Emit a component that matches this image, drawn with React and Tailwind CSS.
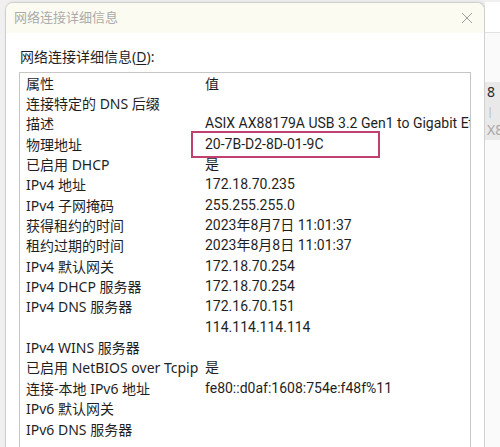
import React from "react";

const rows = [
  ["连接特定的 DNS 后缀", ""],
  ["描述", "ASIX AX88179A USB 3.2 Gen1 to Gigabit Ethernet Adapter"],
  ["物理地址", "20-7B-D2-8D-01-9C"],
  ["已启用 DHCP", "是"],
  ["IPv4 地址", "172.18.70.235"],
  ["IPv4 子网掩码", "255.255.255.0"],
  ["获得租约的时间", "2023年8月7日 11:01:37"],
  ["租约过期的时间", "2023年8月8日 11:01:37"],
  ["IPv4 默认网关", "172.18.70.254"],
  ["IPv4 DHCP 服务器", "172.18.70.254"],
  ["IPv4 DNS 服务器", "172.16.70.151"],
  ["", "114.114.114.114"],
  ["IPv4 WINS 服务器", ""],
  ["已启用 NetBIOS over Tcpip", "是"],
  ["连接-本地 IPv6 地址", "fe80::d0af:1608:754e:f48f%11"],
  ["IPv6 默认网关", ""],
  ["IPv6 DNS 服务器", ""],
];

const font = { fontFamily: '"Noto Sans", "Noto Sans CJK SC", sans-serif' };
const valFont = { fontFamily: 'Roboto, "Noto Sans CJK SC", sans-serif' };

export default function App() {
  return (
    <div
      className="w-[500px] h-[447px] overflow-hidden bg-[#f0f0f0] flex pt-[2px] pl-[5px]"
      style={font}
    >
      <div className="w-[480px] h-[460px] shrink-0 rounded-t-[8px] border border-[#d0d0d0] bg-white overflow-hidden flex flex-col shadow-[1px_0_3px_rgba(0,0,0,0.12)]">
        <div className="h-[30px] bg-[#fbfbf2] flex items-center justify-between pl-[8px] pr-[10px] shrink-0">
          <span className="text-[13px] text-[#ababab]">网络连接详细信息</span>
          <svg width="12" height="12" viewBox="0 0 12 12" className="mr-[1px]">
            <path d="M1 1 L11 11 M11 1 L1 11" stroke="#a0a0a0" strokeWidth="1" fill="none" />
          </svg>
        </div>
        <div className="pl-[14px] pt-[14px] text-[14px] leading-[20px] text-[#1f1f1f]">
          网络连接详细信息(<span className="underline underline-offset-2">D</span>):
        </div>
        <div className="relative ml-[13px] mt-[5px] w-[452px] flex-1 border border-[#c6c6c6] pt-0 pl-[6px] text-[14px] text-[#1f1f1f] overflow-hidden">
          <div className="flex h-[20.35px] items-center whitespace-nowrap">
            <div className="w-[179px] shrink-0">属性</div>
            <div>值</div>
          </div>
          {rows.map(([k, v], i) => (
            <div key={i} className="flex h-[20.35px] items-center whitespace-nowrap">
              <div className="w-[179px] shrink-0">{k}</div>
              <div style={valFont}>{v}</div>
            </div>
          ))}
          <div className="absolute left-[171px] top-[58px] w-[189px] h-[27px] border-2 border-[#c0416f]" />
        </div>
      </div>
      <div className="flex-1 flex flex-col bg-[#fafafa]">
        <div className="h-[31px] border-b border-[#e2e2e2] bg-white" />
        <div className="h-[49px]" />
        <div className="h-[58px] bg-[#e9e9e9] pl-[2px] text-[14px] leading-[19px] text-[#2a2a2a] overflow-hidden whitespace-nowrap">
          <div>8</div>
          <div className="text-[#b8b8b8] text-[11px]">|</div>
          <div className="text-[#a8a8a8]">X8</div>
        </div>
      </div>
    </div>
  );
}
